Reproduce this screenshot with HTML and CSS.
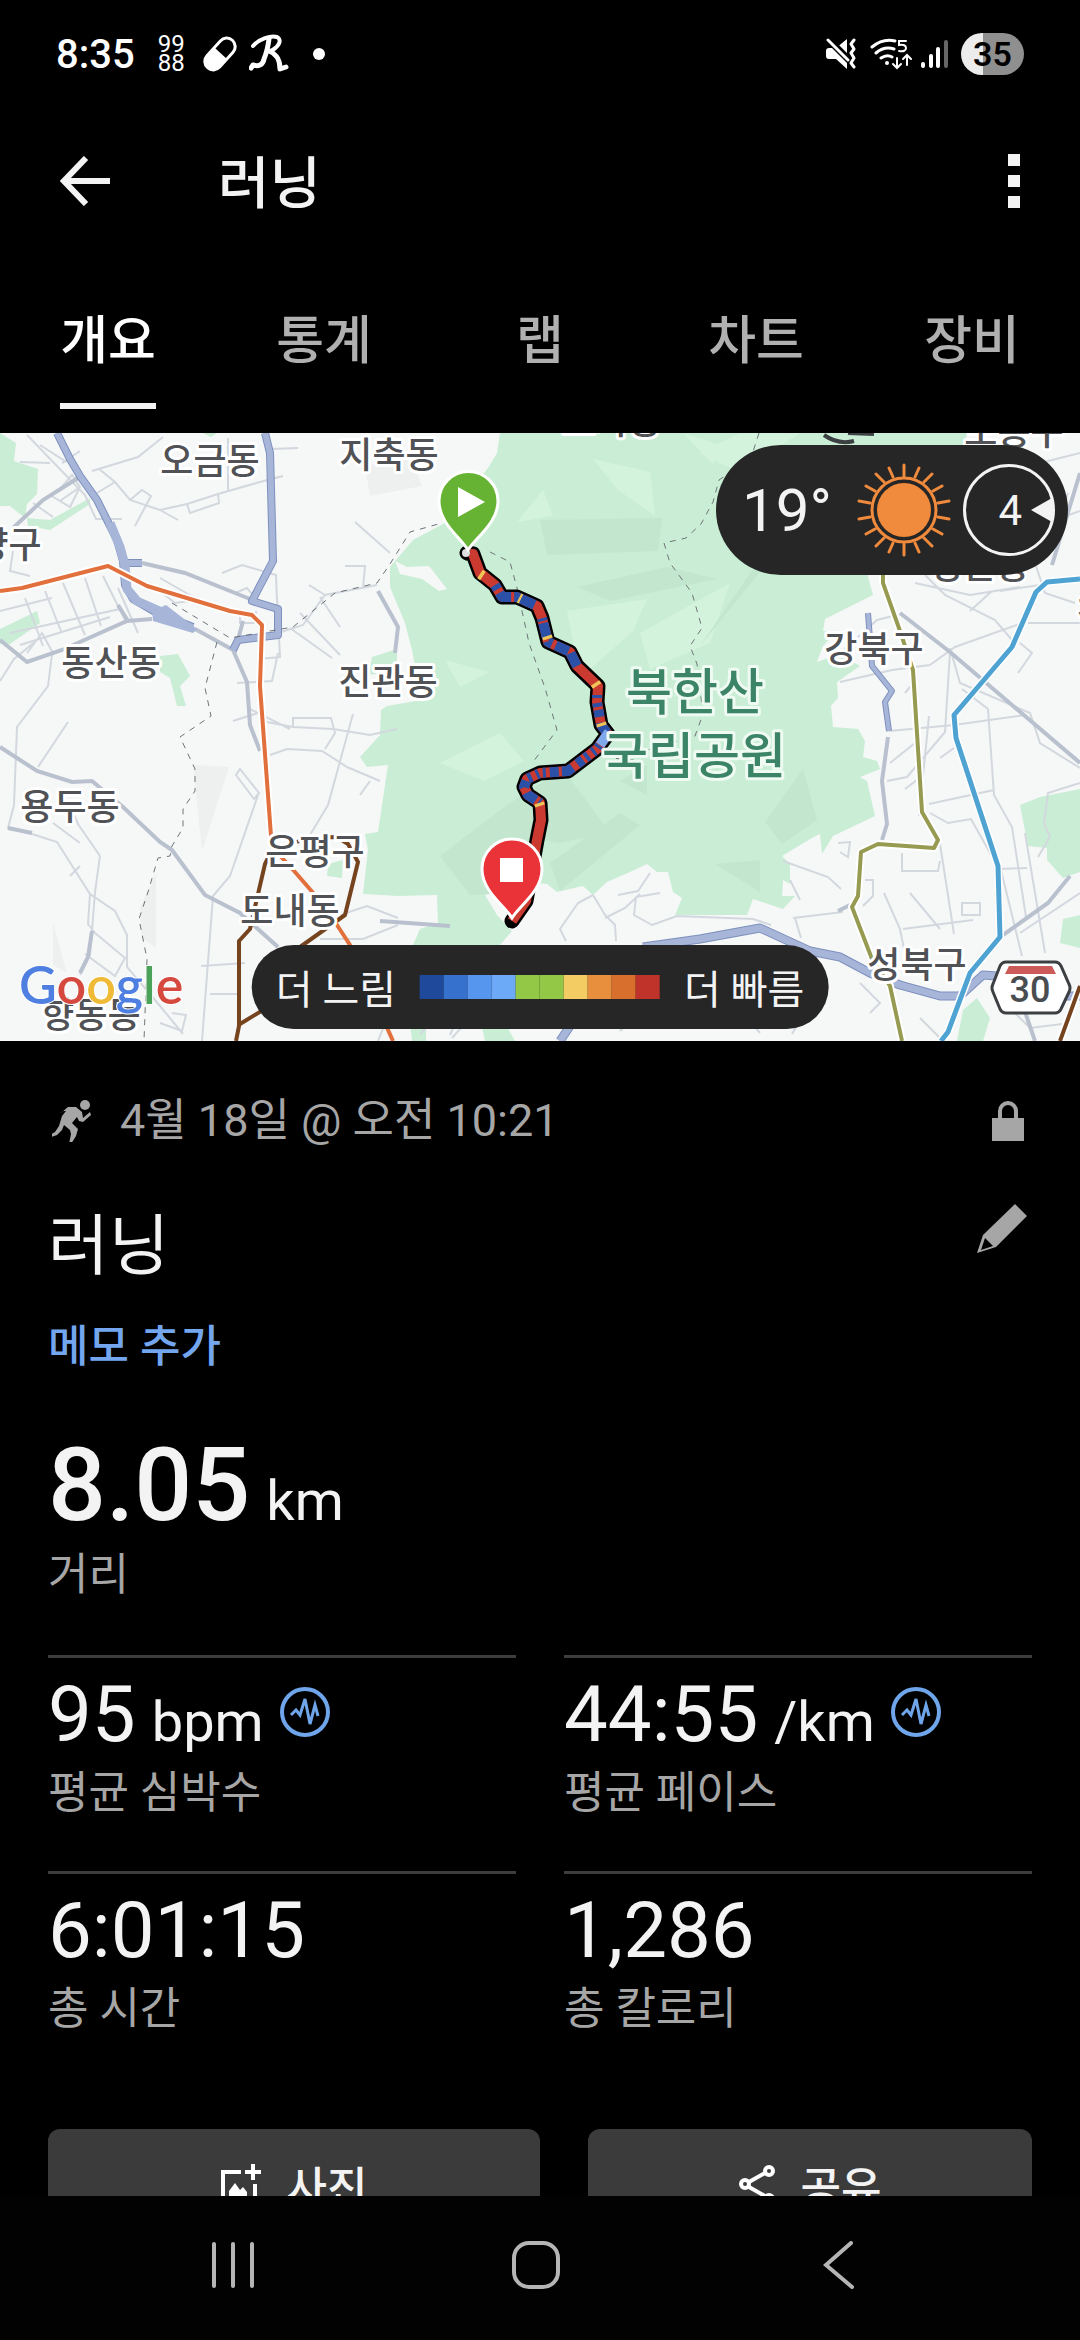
FILE: index.html
```html
<!DOCTYPE html>
<html lang="ko">
<head>
    <meta charset="UTF-8">
    <meta name="viewport" content="width=device-width, initial-scale=1.0">
    <title>러닝</title>
    <link rel="stylesheet" href="styles.css">
</head>
<body>

<div class="app">

    <div class="status-bar">
        <div class="status-left">
            <span class="clock">8:35</span>
            <span class="digits-icon"><span>99</span><span>88</span></span>
            <svg width="38" height="38" viewBox="0 0 38 38">
                <g transform="rotate(-48 19 19)">
                    <rect x="-1" y="9" width="40" height="20" rx="10" fill="#fff"/>
                    <path d="M20 12h9a7 7 0 0 1 0 14h-9z" fill="#000"/>
                </g>
            </svg>
            <svg width="40" height="40" viewBox="0 0 40 40" fill="none" stroke="#fff" stroke-linecap="round" stroke-linejoin="round">
                <path d="M4 12C10 5 22 1 28 3c6 3 1 11-7 14" stroke-width="4"/>
                <path d="M20 5c-1 8-2 13-5 20-1 5-4 8-11 6l-2 3M20 17c6 2 11 8 11 18l6-2" stroke-width="5"/>
            </svg>
            <span class="dot"></span>
        </div>
        <div class="status-right">
            <svg class="mute" width="32" height="32" viewBox="0 0 32 32">
                <path d="M4 10h7L22 1v30L11 21H4q-3 0-3-3v-5q0-3 3-3z" fill="#fff"/>
                <path d="M2 0l25 25" stroke="#000" stroke-width="7"/>
                <path d="M3 2l20 20" stroke="#fff" stroke-width="3" stroke-linecap="round"/>
                <path d="M29 2l-3 4 3 5-3 4 3 5-3 5 3 4" fill="none" stroke="#fff" stroke-width="3" stroke-linejoin="round" stroke-linecap="round"/>
            </svg>
            <svg class="wifi" width="44" height="34" viewBox="0 0 44 34" fill="none" stroke="#fff" stroke-width="3" stroke-linecap="round">
                <path d="M3 10Q14 1 26 4M7 16q8-7 18-4M12 21q6-4 11-1"/>
                <circle cx="18" cy="26" r="2" fill="#fff" stroke="none"/>
                <path d="M28 21v10m-4-4l4 4 4-4M38 28V18m-4 4l4-4 4 4" stroke-width="2"/>
                <path d="M37 4h-7v4q7-1 7 3t-7 3" stroke-width="2"/>
            </svg>
            <svg width="28" height="32" viewBox="0 0 28 32" stroke="#fff" stroke-width="4" stroke-linecap="round">
                <path d="M2 26v2M10 18v10M17 11v17"/>
                <path d="M25 4v24" stroke="#666"/>
            </svg>
            <span class="battery">35</span>
        </div>
    </div>

    <header class="app-bar">
        <button class="icon-button" aria-label="뒤로">
            <svg width="50" height="50" viewBox="0 0 50 50" fill="none" stroke="#f3f3f3" stroke-width="6">
                <path d="M50 25H5M26 2L4 25l22 23"/>
            </svg>
        </button>
        <h1>러닝</h1>
        <button class="icon-button menu" aria-label="메뉴"><i></i><i></i><i></i></button>
    </header>

    <nav class="tabs">
        <a href="#overview" class="active">개요</a>
        <a href="#stats">통계</a>
        <a href="#laps">랩</a>
        <a href="#charts">차트</a>
        <a href="#gear">장비</a>
    </nav>

    <main class="content">
        <section class="map">
            <svg class="map-canvas" viewBox="0 0 1080 608" preserveAspectRatio="xMidYMid slice">
                <rect width="1080" height="608" fill="#f6f7f7"/>

                <!-- terrain -->
                <g fill="#eeefef">
                    <path d="M365 33l45-10 12 30-52 10zM193 332l36 2-27 84zM156 440v75l-14-10-2-30zM53 490l14 50-14-8z"/>
                </g>

                <!-- parks -->
                <g fill="#c9eed5">
                    <path d="M0 0l16 10-2 18 24 8-1 25-10 10-2 14-15-12H0zM27 85l23 2 40-22v6L50 97l-22-4zM0 196l37-18 3 12-30 21H0zM160 223l18-2 12 22-10 10 6 20h-9l-7-28-10-6zM328 431l15-4-1 18-15-2zM203 0h14l-6 4z"/>
                    <path d="M500 0L497 20 488 35 443 91 413 107 390 134 390 154 405 190 412 217 415 233 430 237 433 265 387 273 381 277 380 302 360 324 367 334 388 332 378 399 365 401 368 417 363 461 398 463 437 462 438 490 420 496 413 512 500 512 512 498 497 482 485 462 527 449 547 451 557 459 583 453 593 462 607 449 630 439 647 431 657 439 668 439 673 459 682 465 675 482 747 482 753 466 783 476 795 463 782 463 783 447 790 451 790 431 782 423 812 405 820 401 822 421 833 403 875 383 867 348 860 344 880 336 877 328 863 324 865 308 858 296 833 294 831 273 838 265 837 249 860 233 840 221 817 229 823 213 837 198 823 198 825 186 873 162 867 140 900 60 965 10 967 0Z"/>
                    <path d="M372 224l25-8v22l-28 4zM1020 372l20-8 40-8v83l-17 6-16-18v-12l-19-2zM1063 486l17-4v33l-20-5zM963 577l14-12 13 20-7 23h-26zM410 590h16v18h-14zM480 585l20-4 15 27h-30z"/>
                </g>
                <g fill="#d4f3dc">
                    <path d="M593 26l57 13 5 44-37-26zM517 89l26-32 10 26zM683 0l37 12-7 19zM567 178l80-12-14 32-53 47zM445 227l44 12-29 15zM440 330l60-30 24 28-40 20zM640 200l90-50-20 60-60 26zM700 20l40-20 60 0-60 40z"/>
                </g>
                <g fill="#c2e7ce">
                    <path d="M540 87l122-2-4 33-111 4zM577 154l90-20 50 12-107 22zM440 423l67-51 56-36 47 64-50 10-30-5-20 55-40 2zM620 348l27-16v30zM765 389l38-53 14 51-35 24zM715 431l45-4v32zM700 213L817 43l43-3-83 78zM560 458l-10-28 70-50 20 12z"/>
                </g>
                <path d="M395 128l12 6 22-1 18 23-8 2-17-12-22-5z" fill="#f6f7f7"/>

                <!-- small streets -->
                <g fill="none" stroke="#d3d8df" stroke-width="2">
                    <path d="M27 2l58 60 11 24 26 0M20 29l30 1M163 4l-25 20-46 14M115 49l15 18 30 10 27-6 31-10 42-12 23-6M130 67l12-10 9 6-16 30M228 5v54M160 77l18 10M187 71l3 9 29-10-1-9M97 60l18-11-16-13M60 56l12-14 8 12-20 14M50 62l20 12 10-20M33 70l20 14M40 12l25 16 15-10M70 26l-8 4M355 89l35 31M270 16l28-1"/>
                    <path d="M52 221l-4 32-31 41-3 78-6 23 24 6 25 8 33 52 25 17 12 24v32l33 39 23 28M68 289l-30 45M100 423l-22-32-6-15M100 423l-5 36-3 39-2 24-10 20M70 443l10-10M53 390l27 20M95 500l30 25-10 18-30-22M90 461l-2 30 8 10M258 362l-28 81-17 20-11 145M240 336l19 24-5 6-18-24zM201 533l44-3M210 561h30"/>
                    <path d="M25 165l18 48M45 158l16 40M63 150l22 52M85 145l16 48M103 143l22 44M0 178l52-13M10 200l110-24M20 212l90-28M27 220l15-20 12 22M0 248l14-22 22-18M13 118l-3 20 20 5M118 155l20 45"/>
                    <path d="M150 150l25 20 15-2M160 145l35 20M168 180l20 12M222 140l20-8 34 10 1 26M235 160l12-5 8 10M240 178v12h16v-12"/>
                    <path d="M267 289l26 5 40 2 37 6 27-6M293 294v-9h38l4 15-10 16M270 322l17-6 35 2 25 16 33 14M353 281l-25 91-21 35M370 348l-10 14M278 200l25-8 22-30 52-10M325 162l-16-10M345 133h20l-2 22M300 180l40 42M290 195l42 30M258 226l22-2-3-60M320 164l20 30M237 250l35-2 6-28M233 288l25-8M250 276l40 20"/>
                    <path d="M340 482l27-9 31 12M320 506l43 0 35-14M378 608l8-20-6-12M160 590l22 8 4-16-14-2"/>
                    <path d="M593 462l-15 8-18 26 6 12M593 462l12 20 10 10 1 16M605 485l20-10 15-14M618 462l20-4 12-18M660 460l-24 4-2 18 18 10 25-9 76 3 18 6M420 601l20-20 30 4-18 20M460 580l-10 22"/>
                    <path d="M915 150l55 12 50-8M925 142l20 20 50 25 17 20M970 178l22-20M840 249l52-12 38-5M837 223l40-36 20-5M930 232l25-18 70-25M950 219l-5 80-38 45-20 4M929 283l-10 100M889 298l65-6 71-10M962 256l26 20 6 86 18 32 14 90M929 371l65-14M930 380l18 10 23-4 28 50 28-1M950 215l10 35 70 30 10 30 40 25M954 315l-14 10M1020 210l12 10-14 20M1025 100l20 60 30 10M1040 30l40-10M1068 60l-20 60M1047 90l33-12M1000 158l40-6M1028 190h52M1080 350l-32 10-4 30 6 14-12 20M790 447l10 20M783 428l45 16 13 12M793 485l50-6M795 485l6 20M865 447h8v16l-10 10M902 420v18h36l2-10M884 460l16 36 4 20M910 460l30 36M940 411l14 90M903 496l70-9M962 470h18v12h-18zM1000 433l22 90M1025 400l20 120M1020 500l60-40"/>
                    <path d="M715 590l30-8 15 18M780 575l20 12-8 14M860 550l20 20-10 10M920 585l20 20M1010 575l20 20 40-5M838 410l12-1-2 15-8-5M905 260l10-12M890 330l25-20M905 356l16-12M620 598l20-20 15 14M680 590l30-15"/>
                </g>
                <g fill="none" stroke="#b9c1cf" stroke-width="4">
                    <path d="M142 130l43 10 65 26M233 217l14 32 3 43 10 26M0 314l37 24 35 11 20-1 31 26 37 35 12 8 33 45 35 18 38 34M0 207l27 22 35-12 65-29 25-2M13 95l30-28 35-22M378 158l20 36-3 26M888 304l-6 44 5 43-5 16M900 180l50 39 75 64 55 47M1070 443l-22 27-45 32M1023 573l12 35M8 395l24 5M92 498l-4 26-8 16M380 488l70 5M118 172l10 16M195 196l40 22 8-30M1080 40l-28 92M838 478l12-6"/>
                </g>

                <!-- highways -->
                <g fill="none" stroke-linejoin="round">
                    <g stroke="#7d90bd" stroke-width="9">
                        <path d="M57 0l13 26 10 17 17 24 20 40 6 21 2 24 8 14 24 14 36 14M123 130h19M265 0l5 20 3 108-21 40 26 8v26l-40 5-5 10" stroke-width="8"/>
                        <path d="M868 180l4 53 20 25-7 11 4 29" stroke-width="6"/>
                        <path d="M643 514l57-8 60-11 50 23 30 6 30 16 30 12 40 11h20l23-21 27 2 57 19h13M560 608l12-18"/>
                    </g>
                    <path d="M57 0l13 26 10 17 17 24 20 40 6 21 2 24 8 14 24 14 36 14M123 130h19M265 0l5 20 3 108-21 40 26 8v26l-40 5-5 10" stroke="#a6b5d8" stroke-width="6"/>
                    <path d="M110 90l10 24 5 18 2 24 10 12 34 15" stroke="#a6b5d8" stroke-width="9"/>
                    <path d="M152 178l14-6 31 24-4 4-40-12z" fill="#a6b5d8"/>
                    <path d="M868 180l4 53 20 25-7 11 4 29" stroke="#a6b5d8" stroke-width="4"/>
                    <path d="M643 514l57-8 60-11 50 23 30 6 30 16 30 12 40 11h20l23-21 27 2 57 19h13M560 608l12-18" stroke="#a6b5d8" stroke-width="7"/>
                </g>

                <!-- district borders -->
                <g fill="none" stroke="#6f7478" stroke-width="1" stroke-dasharray="6 6">
                    <path d="M172 170l58 35 63-11 42-34 42-10 13-19 20-32 32-9M217 209l-12 46 6 28-31 21 15 32v22l-12 18v19l-11 18-2 10-12 2-10 34-9 27 8 40-3 82"/>
                    <path d="M490 119l20 10 7 26 12 55 16 45 12 42-24 32M759 0l-8 25-32 22-6 22-12 22-15 14-22 5 6 20 22 30 10 35-12 18 7 18 6 50-8 22-48 14-12 10-25-2"/>
                </g>

                <!-- subway lines -->
                <g fill="none" stroke-linejoin="round">
                    <g stroke="#fff" stroke-width="8">
                        <path d="M0 158l22-3 86-22 39 20 83 25 22 4 10 10-2 61 11 150"/>
                        <path d="M883 142v8l17 48 13 39 9 142 16 28-4 8-56-4-17 8-3 44-6 11 20 52 18 27 12 55M1080 146l-33 3-11 10-24 55-58 68 2 23 42 128 2 71-30 36-22 59-7 9M1080 553l-20 55"/>
                    </g>
                    <path d="M297 409l10-4 30-1 11 7 10 18-13 53-45 32M273 415l-8 16-10 43-5 22-11 12v85l-3 15M240 591l23-14 40-20M1080 553l-20 55" stroke="#75441f" stroke-width="4"/>
                    <path d="M0 158l22-3 86-22 39 20 83 25 22 4 10 10-2 61 11 150 2 12 22 24 20 23 22 30 13 20 43 96" stroke="#e2703c" stroke-width="4"/>
                    <path d="M883 142v8l17 48 13 39 9 142 16 28-4 8-56-4-17 8-3 44-6 11 20 52 18 27 12 55" stroke="#979b52" stroke-width="4"/>
                    <path d="M1080 146l-33 3-11 10-24 55-58 68 2 23 42 128 2 71-30 36-22 59-7 9" stroke="#4fa3d2" stroke-width="5"/>
                </g>

                <!-- route -->
                <g fill="none" stroke-linejoin="round" stroke-linecap="round">
                    <path d="M467 120L473 121 480 140 495 152 502 164 517 164 537 173 542 185 548 209 570 219 577 233 598 253 597 269 601 292 608 301 597 316 568 338 540 340 527 346 524 354 528 362 540 370 541 387 537 407 526 468 512 488" stroke="#000" stroke-width="15"/>
                </g>
                <g fill="none" stroke-linejoin="round" stroke-width="10">
                    <path d="M470 121L473 121 480 140 495 152 502 164 517 164 537 173 542 185 548 209 570 219 577 233 598 253 597 269 601 292 608 301 597 316 568 338 540 340 527 346 524 354 528 362 540 370 541 387 537 407 526 468 512 488" stroke="#cb3a30"/>
                    <path d="M495 152L502 164 517 164 537 173 542 185 548 209 570 219 577 233" stroke="#2a50a8" stroke-dasharray="5 4 14 3 22 16 3 2 16 3"/>
                    <path d="M597 262L597 269 601 292 608 301 597 316 568 338 540 340 527 346 524 354 528 362 540 370" stroke="#2a50a8" stroke-dasharray="3 5 4 3 7 6 12 3 9 4 3 4"/>
                    <path d="M480 141l3 2M519 165l2 1M547 203l1 3M595 250l2 3M601 290l1 3M539 370l1 3" stroke="#f0c557"/>
                    <path d="M609 299l-9 13" stroke="#7fa9ea"/>
                    <circle cx="466" cy="120" r="4" fill="#ddd"/>
                </g>

                <!-- area labels -->
                <g class="map-label">
                    <text x="210" y="41">오금동</text>
                    <text x="389" y="35">지축동</text>
                    <text x="-8" y="125">덕양구</text>
                    <text x="111" y="243">동산동</text>
                    <text x="388" y="262">진관동</text>
                    <text x="70" y="387">용두동</text>
                    <text x="315" y="432">은평구</text>
                    <text x="290" y="491">도내동</text>
                    <text x="91" y="595">향동동</text>
                    <text x="612" y="1">효자동</text>
                    <text x="1014" y="12">도봉구</text>
                    <text x="980" y="146">쌍문동</text>
                    <text x="1110" y="193">창동</text>
                    <text x="874" y="229">강북구</text>
                    <text x="917" y="545">성북구</text>
                </g>
                <g class="park-label">
                    <text x="695" y="277">북한산</text>
                    <text x="694" y="341">국립공원</text>
                </g>
                <path d="M824 2q14 10 30 6M848 0l26 1" fill="none" stroke="#3d4043" stroke-width="4"/>

                <g class="road-shield">
                    <path d="M1006 529h49q4 0 6 4l8 18q2 4 0 8l-8 17q-2 4-6 4h-49q-4 0-6-4l-7-17q-2-4 0-8l7-18q2-4 6-4z" fill="#fff" stroke="#3d4043" stroke-width="3"/>
                    <path d="M1009 533h43l4 8h-51z" fill="#cb5a58"/>
                    <text x="1030" y="569">30</text>
                </g>

                <!-- start / finish pins -->
                <path d="M468 117C460 104 439 90 439 68a29 29 0 0 1 59 0C498 90 476 104 468 117z" fill="#66b233" stroke="#fff" stroke-width="3"/>
                <path d="M458 54v30l27-15z" fill="#fff"/>
                <path d="M512 485C504 472 482 458 482 436a30 30 0 0 1 60 0C542 458 520 472 512 485z" fill="#e93338" stroke="#fff" stroke-width="3"/>
                <path d="M500 425h23v24h-23z" fill="#fff"/>

                <text class="google-logo" x="19" y="571"><tspan fill="#4f80e1">G</tspan><tspan fill="#d6493f">o</tspan><tspan fill="#efba35">o</tspan><tspan fill="#4f80e1">g</tspan><tspan fill="#4ba35a">l</tspan><tspan fill="#d6493f">e</tspan></text>
            </svg>

            <div class="weather">
                <span class="temp">19°</span>
                <svg width="94" height="94" viewBox="-47 -47 94 94" fill="none" stroke="#f08a3c" stroke-width="3">
                    <circle r="27" fill="#f08a3c" stroke="none"/>
                    <circle r="32"/>
                    <g stroke-linecap="round">
                        <path d="M0-34V-45M0 34V45M34-7L45-9M34 7L45 9M-34-7L-45-9M-34 7L-45 9"/>
                        <path d="M11-33L15-42M-11-33L-15-42M11 33L15 42M-11 33L-15 42M20-28L28-36M-20-28L-28-36M20 28L28 36M-20 28L-28 36M29-19L38-24M-29-19L-38-24M29 19L38 24M-29 19L-38 24"/>
                    </g>
                </svg>
                <div class="wind">
                    <span>4</span>
                    <svg width="21" height="24" viewBox="0 0 21 24"><path d="M0 12L21 0v24z" fill="#f3f3f3"/></svg>
                </div>
            </div>

            <div class="legend">
                <span>더 느림</span>
                <div class="scale"><i></i><i></i><i></i><i></i><i></i><i></i><i></i><i></i><i></i><i></i></div>
                <span>더 빠름</span>
            </div>
        </section>

        <section class="details">
            <div class="meta">
                <svg width="40" height="42" viewBox="0 0 40 42" fill="#a6a6a6">
                    <circle cx="33" cy="5" r="5"/>
                    <path d="M10 12l6-5h8l6 5 1 6 7-6 1 3-8 7-4-1-2-4-5 6 6 6-2 7-5 8h-2l2-10-1-4-6-5-2 5-5 5-9 3v-2l7-4 4-6 3-10 4-5h-3l-4 3z"/>
                </svg>
                <span>4월 18일 @ 오전 10:21</span>
                <svg class="lock" width="32" height="40" viewBox="0 0 32 40">
                    <path d="M0 17h32v23H0z" fill="#a6a6a6"/>
                    <path d="M8 19v-9a8 8 0 0 1 16 0v9" fill="none" stroke="#a6a6a6" stroke-width="4"/>
                </svg>
            </div>

            <div class="title-row">
                <h2>러닝</h2>
                <button class="icon-button edit" aria-label="편집">
                    <svg width="50" height="50" viewBox="0 0 50 50">
                        <path d="M38 0l12 12-31 31L0 49 6 31z" fill="#a6a6a6"/>
                        <path d="M8 34l8 8-12 4z" fill="#000"/>
                    </svg>
                </button>
            </div>
            <a href="#note" class="note-link">메모 추가</a>

            <div class="distance">
                <p class="value">8.05 <small>km</small></p>
                <p class="label">거리</p>
            </div>

            <div class="stats">
                <div class="stat">
                    <p class="value">95 <small>bpm</small>
                        <svg class="pulse" width="50" height="50" viewBox="0 0 50 50" fill="none" stroke="#6fa5ea">
                            <circle cx="25" cy="25" r="23" stroke-width="4"/>
                            <path d="M11 28l5-5 4 5 5-16 5 25 5-19 3 11" stroke-width="3"/>
                        </svg>
                    </p>
                    <p class="label">평균 심박수</p>
                </div>
                <div class="stat">
                    <p class="value">44:55 <small>/km</small>
                        <svg class="pulse" width="50" height="50" viewBox="0 0 50 50" fill="none" stroke="#6fa5ea">
                            <circle cx="25" cy="25" r="23" stroke-width="4"/>
                            <path d="M11 28l5-5 4 5 5-16 5 25 5-19 3 11" stroke-width="3"/>
                        </svg>
                    </p>
                    <p class="label">평균 페이스</p>
                </div>
                <div class="stat">
                    <p class="value">6:01:15</p>
                    <p class="label">총 시간</p>
                </div>
                <div class="stat">
                    <p class="value">1,286</p>
                    <p class="label">총 칼로리</p>
                </div>
            </div>

            <div class="actions">
                <button>
                    <svg width="40" height="42" viewBox="0 0 40 42" fill="none" stroke="#fff" stroke-width="4">
                        <path d="M20 8H2v32h32V20M32 0v16M24 8h16"/>
                        <path d="M8 32v-5l6-8 5 7 3-3 4 5v4z" fill="#fff" stroke="none"/>
                    </svg>
                    사진
                </button>
                <button>
                    <svg width="36" height="42" viewBox="0 0 36 42" fill="none" stroke="#fff" stroke-width="4">
                        <path d="M10 18L26 9M10 23l16 9"/>
                        <circle cx="30" cy="7" r="4"/>
                        <circle cx="6" cy="20" r="4"/>
                        <circle cx="30" cy="35" r="4"/>
                    </svg>
                    공유
                </button>
            </div>
        </section>
    </main>

    <div class="nav-bar">
        <button aria-label="최근 앱">
            <svg width="44" height="48" viewBox="0 0 44 48" stroke="#b5b5b5" stroke-width="4" stroke-linecap="round">
                <path d="M3 3v42M22 3v42M41 3v42"/>
            </svg>
        </button>
        <button aria-label="홈">
            <svg width="48" height="48" viewBox="0 0 48 48" fill="none" stroke="#b5b5b5" stroke-width="4">
                <rect x="2" y="2" width="44" height="44" rx="15"/>
            </svg>
        </button>
        <button aria-label="뒤로">
            <svg width="32" height="48" viewBox="0 0 32 48" fill="none" stroke="#b5b5b5" stroke-width="4" stroke-linecap="round">
                <path d="M28 2L3 24l26 22"/>
            </svg>
        </button>
    </div>

</div>

</body>
</html>
```

FILE: styles.css
```css
* {
    box-sizing: border-box;
}
body {
    margin: 0;
    background-color: #000;
    color: #f3f3f3;
    font-family: Roboto, "Noto Sans CJK KR", sans-serif;
}
h1, h2, p {
    margin: 0;
    font-weight: 400;
}
a {
    text-decoration: none;
}
button {
    font-family: inherit;
    color: inherit;
    background: none;
    border: none;
    padding: 0;
    cursor: pointer;
}
svg {
    display: block;
    flex-shrink: 0;
}
.app {
    display: flex;
    flex-direction: column;
    height: 100vh;
}

/* status bar */
.status-bar {
    display: flex;
    justify-content: space-between;
    align-items: center;
    height: 108px;
    padding: 0 56px;
    color: #fff;
}
.status-left,
.status-right {
    display: flex;
    align-items: center;
}
.status-left {
    gap: 10px;
}
.clock {
    font-size: 40px;
    font-weight: 500;
    margin-right: 13px;
}
.digits-icon {
    display: flex;
    flex-direction: column;
    font-size: 24px;
    line-height: 19px;
    margin-right: 6px;
}
.dot {
    width: 12px;
    height: 12px;
    margin-left: 14px;
    border-radius: 50%;
    background-color: #fff;
}
.mute {
    margin-right: 12px;
}
.wifi {
    margin-right: 8px;
}
.battery {
    width: 63px;
    margin-left: 12px;
    border-radius: 21px;
    background: linear-gradient(to right, #ececec 35%, #8f8f8f 35%);
    color: #000;
    font-size: 34px;
    font-weight: 600;
    line-height: 42px;
    text-align: center;
}

/* header */
.app-bar {
    display: flex;
    align-items: center;
    height: 146px;
    padding: 0 60px;
}
.app-bar h1 {
    flex-grow: 1;
    margin-left: 108px;
    padding-bottom: 6px;
    font-size: 56px;
    font-weight: 500;
}
.menu {
    display: flex;
    flex-direction: column;
    gap: 9px;
}
.menu i {
    width: 12px;
    height: 12px;
    background-color: #f3f3f3;
}
.tabs {
    display: grid;
    grid-template-columns: repeat(5, 1fr);
    justify-items: center;
    padding: 56px 0 24px;
}
.tabs a {
    padding-bottom: 29px;
    border-bottom: 6px solid transparent;
    color: #b0b0b0;
    font-size: 52px;
    font-weight: 500;
    line-height: 64px;
}
.tabs .active {
    color: #fff;
    border-color: #f3f3f3;
}
.content {
    flex: 1;
    min-height: 0;
    overflow: hidden;
}

/* map */
.map {
    position: relative;
}
.map-canvas {
    width: 100%;
}
.map-label,
.park-label {
    font-family: "Noto Sans CJK KR", sans-serif;
    font-size: 36px;
    font-weight: 500;
    text-anchor: middle;
    fill: #505256;
    stroke: #fff;
    stroke-width: 6px;
    stroke-linejoin: round;
    paint-order: stroke;
}
.park-label {
    font-size: 50px;
    fill: #3b8468;
    stroke: #eefaf2;
}
.road-shield text {
    font-family: Roboto, sans-serif;
    font-size: 36px;
    font-weight: 500;
    text-anchor: middle;
    fill: #4a4d50;
}
.google-logo {
    font-family: Lato, sans-serif;
    font-size: 52px;
    font-weight: 600;
    stroke: #fff;
    stroke-width: 2px;
    paint-order: stroke;
}
.weather,
.legend {
    position: absolute;
    display: flex;
    align-items: center;
    background-color: #262626;
}
.weather {
    top: 12px;
    right: 12px;
    height: 130px;
    padding: 0 13px 0 26px;
    border-radius: 65px;
    gap: 12px;
}
.temp {
    width: 103px;
    font-size: 60px;
}
.wind {
    display: flex;
    align-items: center;
    justify-content: flex-end;
    width: 92px;
    height: 92px;
    border: 3px solid #f3f3f3;
    border-radius: 50%;
    font-size: 42px;
    gap: 9px;
}
.legend {
    left: 50%;
    bottom: 12px;
    height: 84px;
    padding: 0 24px;
    border-radius: 42px;
    gap: 24px;
    font-size: 40px;
    white-space: nowrap;
    transform: translateX(-50%);
}
.scale {
    display: flex;
}
.scale i {
    width: 24px;
    height: 24px;
    background-color: #93c847;
}
.scale i:nth-child(1) { background-color: #1f4a9c; }
.scale i:nth-child(2) { background-color: #3671cd; }
.scale i:nth-child(3) { background-color: #5696ef; }
.scale i:nth-child(4) { background-color: #6caaf8; }
.scale i:nth-child(7) { background-color: #f3cd63; }
.scale i:nth-child(8) { background-color: #e88f3e; }
.scale i:nth-child(9) { background-color: #d96f2c; }
.scale i:nth-child(10) { background-color: #bf332b; }

/* activity details */
.details {
    padding: 48px;
}
.meta {
    display: flex;
    align-items: center;
    padding: 0 8px 0 4px;
    gap: 28px;
    color: #a6a6a6;
    font-size: 45px;
    line-height: 64px;
}
.lock {
    margin-left: auto;
}
.title-row {
    display: flex;
    justify-content: space-between;
    align-items: flex-start;
    margin-top: 46px;
}
.title-row h2 {
    font-size: 66px;
    line-height: 96px;
}
.edit {
    padding: 5px;
}
.note-link {
    display: block;
    margin-top: 20px;
    color: #73a6ee;
    font-size: 44px;
    font-weight: 500;
    line-height: 64px;
}
.distance {
    margin: 46px 0 50px;
}
.value {
    display: flex;
    align-items: baseline;
    gap: 16px;
    font-size: 78px;
    line-height: 96px;
}
.distance .value {
    font-size: 102px;
    font-weight: 500;
    line-height: 120px;
}
.value small {
    font-size: 56px;
    font-weight: 400;
    line-height: 56px;
}
.pulse {
    align-self: flex-start;
    margin-top: 20px;
}
.label {
    color: #a6a6a6;
    font-size: 44px;
    line-height: 60px;
}
.stats {
    display: grid;
    grid-template-columns: 1fr 1fr;
    gap: 48px;
}
.stat {
    padding-top: 9px;
    border-top: 3px solid #3d3d3d;
}
.actions {
    display: grid;
    grid-template-columns: 41fr 37fr;
    gap: 48px;
    margin-top: 90px;
}
.actions button {
    display: flex;
    align-items: center;
    justify-content: center;
    height: 112px;
    border-radius: 12px;
    background-color: #3b3b3b;
    gap: 26px;
    font-size: 44px;
    font-weight: 500;
}

/* system navigation */
.nav-bar {
    display: grid;
    grid-template-columns: repeat(3, 1fr);
    height: 144px;
    padding: 0 90px 6px 82px;
    background-color: #020202;
}
.nav-bar button {
    display: flex;
    align-items: center;
    justify-content: center;
}
```
